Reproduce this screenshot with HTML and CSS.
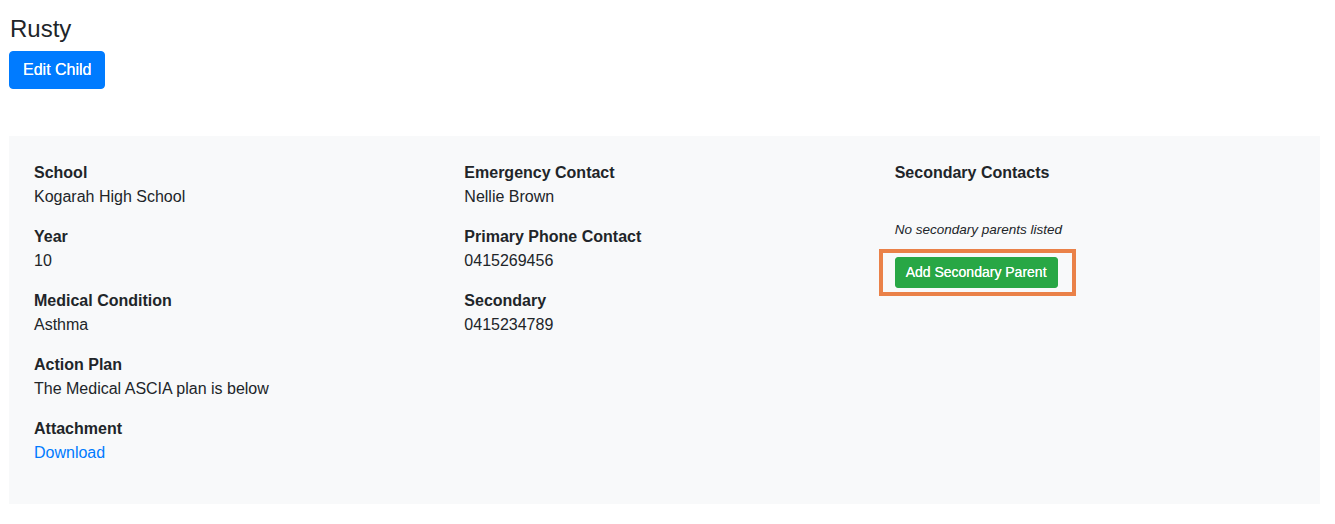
FILE: index.html
```html
<!DOCTYPE html>
<html lang="en">
<head>
  <meta charset="UTF-8" />
  <meta name="viewport" content="width=device-width, initial-scale=1" />
  <title>Rusty - Child Details</title>
  <link rel="stylesheet" href="styles.css">
</head>
<body>

  <div class="page">
    <h4 class="child-name">Rusty</h4>
    <a href="#" class="btn btn-primary">Edit Child</a>

    <!-- Child details panel -->
    <div class="panel">
      <div class="col">
        <div class="field">
          <div class="label">School</div>
          <div class="value">Kogarah High School</div>
        </div>
        <div class="field">
          <div class="label">Year</div>
          <div class="value">10</div>
        </div>
        <div class="field">
          <div class="label">Medical Condition</div>
          <div class="value">Asthma</div>
        </div>
        <div class="field">
          <div class="label">Action Plan</div>
          <div class="value">The Medical ASCIA plan is below</div>
        </div>
        <div class="field">
          <div class="label">Attachment</div>
          <a href="#" class="value link">Download</a>
        </div>
      </div>

      <div class="col">
        <div class="field">
          <div class="label">Emergency Contact</div>
          <div class="value">Nellie Brown</div>
        </div>
        <div class="field">
          <div class="label">Primary Phone Contact</div>
          <div class="value">0415269456</div>
        </div>
        <div class="field">
          <div class="label">Secondary</div>
          <div class="value">0415234789</div>
        </div>
      </div>

      <div class="col">
        <div class="label">Secondary Contacts</div>
        <p class="empty-note">No secondary parents listed</p>
        <div class="highlight">
          <a href="#" class="btn btn-success btn-sm">Add Secondary Parent</a>
        </div>
      </div>
    </div>
  </div>

</body>
</html>
```

FILE: styles.css
```css
body {
  font-family: "Liberation Sans", Arial, sans-serif;
  font-size: 16px;
  line-height: 1.5;
  color: #212529;
  background: #fff;
  margin: 0;
}
.page {
  padding: 15px 15px 21px 9px;
}
.child-name {
  font-size: 24px;
  font-weight: 500;
  line-height: 1.2;
  margin: 0 0 7px 1px;
}
.btn {
  display: inline-block;
  font-size: 16px;
  line-height: 1.5;
  padding: 6px 13px;
  border: 1px solid transparent;
  border-radius: 4px;
  color: #fff;
  text-decoration: none;
  text-shadow: 0 0 0.4px #fff;
}
.btn-primary {
  background: #007bff;
  border-color: #007bff;
}
.btn-success {
  background: #28a745;
  border-color: #28a745;
}
.btn-sm {
  font-size: 14px;
  padding: 4px 10px;
  border-radius: 3px;
}
.panel {
  margin-top: 47px;
  background: #f8f9fa;
  padding: 25px 10px 23px;
  display: grid;
  grid-template-columns: repeat(3, 1fr);
}
.col {
  padding: 0 15px;
}
.field {
  margin-bottom: 16px;
}
.label {
  font-weight: bold;
}
.value {
  display: block;
}
.link {
  color: #007bff;
  text-decoration: none;
}
.empty-note {
  font-size: 13.5px;
  font-style: italic;
  line-height: 20px;
  margin: 35px 0 9px;
}
.highlight {
  display: inline-block;
  margin-left: -16px;
  padding: 4px 14px 4px 12px;
  border: 4px solid #ea8148;
  line-height: 0;
}
.highlight .btn {
  line-height: 21px;
}
```
